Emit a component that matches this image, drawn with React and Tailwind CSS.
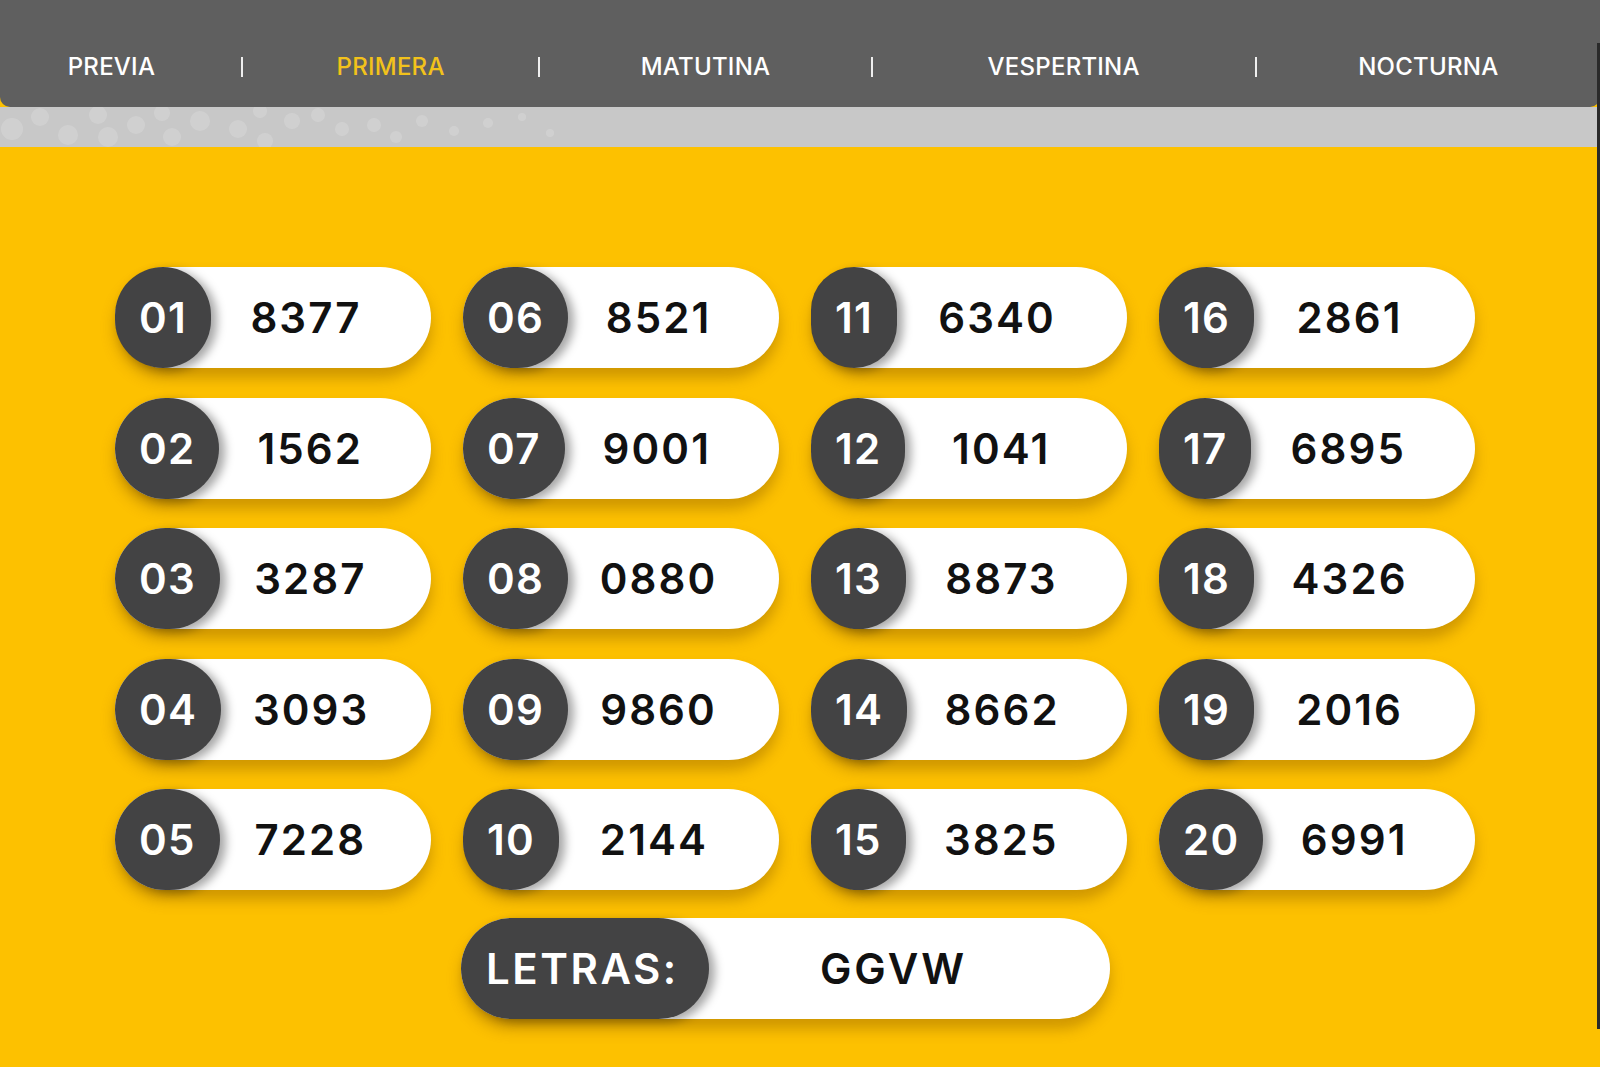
import React from "react";

const tabs = [
  { label: "PREVIA", w: "w-[242px] pr-[18px]", active: false },
  { label: "PRIMERA", w: "w-[297px]", active: true },
  { label: "MATUTINA", w: "w-[332px]", active: false },
  { label: "VESPERTINA", w: "w-[384px]", active: false },
  { label: "NOCTURNA", w: "w-[345px]", active: false },
];

// results in draw order (01..20), shown column by column
const numbers = [
  "8377", "1562", "3287", "3093", "7228",
  "8521", "9001", "0880", "9860", "2144",
  "6340", "1041", "8873", "8662", "3825",
  "2861", "6895", "4326", "2016", "6991",
];

// faint bokeh dots on the grey strip under the menu
const dots = [
  [12, 22, 11], [40, 10, 9], [68, 28, 10], [98, 8, 9], [108, 30, 10], [136, 18, 9],
  [162, 6, 8], [172, 30, 9], [200, 14, 10], [238, 22, 9], [260, 4, 7], [265, 34, 8],
  [292, 14, 8], [318, 8, 7], [342, 22, 7], [374, 18, 7], [396, 30, 6], [422, 14, 6],
  [454, 24, 5], [488, 16, 5], [522, 10, 4], [550, 26, 4],
];

const Pill = ({ pos, num }) => (
  <div className="flex h-[101px] items-stretch rounded-full bg-white shadow-[0_10px_14px_rgba(150,100,0,0.45)]">
    <div className="flex min-w-[86px] items-center justify-center rounded-full bg-[#434344] px-[24px] text-[42px] font-semibold tracking-[0.03em] text-white shadow-[6px_3px_10px_rgba(0,0,0,0.35)]">
      {pos}
    </div>
    <div className="flex flex-1 items-center justify-center pr-[30px] text-[42px] font-semibold tracking-[0.05em] text-[#111]">
      {num}
    </div>
  </div>
);

export default function App() {
  const cells = [];
  for (let row = 0; row < 5; row++) {
    for (let col = 0; col < 4; col++) {
      const n = col * 5 + row;
      cells.push({ pos: String(n + 1).padStart(2, "0"), num: numbers[n] });
    }
  }

  return (
    <div className="relative min-h-[1067px] w-[1600px] overflow-hidden bg-[#fdc100] font-['Inter',sans-serif]">
      {/* Menu */}
      <div className="flex h-[107px] items-center rounded-b-[10px] bg-[#5f5f5f] pt-[27px]">
        {tabs.map((t, i) => (
          <React.Fragment key={t.label}>
            {i > 0 && <div className="h-[20px] w-[2px] bg-white/90" />}
            <div
              className={`${t.w} text-center text-[24px] font-medium tracking-[0.01em] ${
                t.active ? "text-[#f2c21b]" : "text-white"
              }`}>
              {t.label}
            </div>
          </React.Fragment>
        ))}
      </div>

      {/* grey strip */}
      <div className="h-[40px] bg-[#c8c8c8]">
        <svg width="600" height="40" viewBox="0 0 600 40">
          {dots.map(([x, y, r], i) => (
            <circle key={i} cx={x} cy={y} r={r} fill="#ffffff" opacity="0.16" />
          ))}
        </svg>
      </div>

      {/* Results */}
      <div className="pl-[115px] pt-[120px]">
        <div className="grid grid-cols-[repeat(4,316px)] gap-x-[32px] gap-y-[29.5px]">
          {cells.map((c) => (
            <Pill key={c.pos} pos={c.pos} num={c.num} />
          ))}
        </div>

        <div className="mt-[28px] flex pl-[346px]">
          <div className="flex h-[101px] w-[649px] items-stretch rounded-full bg-white shadow-[0_10px_14px_rgba(150,100,0,0.45)]">
            <div className="flex w-[248px] items-center rounded-full bg-[#434344] pl-[25px] text-[42px] font-semibold tracking-[0.06em] text-white shadow-[6px_3px_10px_rgba(0,0,0,0.35)]">
              LETRAS:
            </div>
            <div className="flex flex-1 items-center justify-center pr-[32px] text-[42px] font-semibold tracking-[0.07em] text-[#111]">
              GGVW
            </div>
          </div>
        </div>
      </div>

      {/* dark edge on the right side */}
      <div className="absolute right-0 top-[43px] h-[986px] w-[3px] bg-[#2a2a2a]" />
    </div>
  );
}
